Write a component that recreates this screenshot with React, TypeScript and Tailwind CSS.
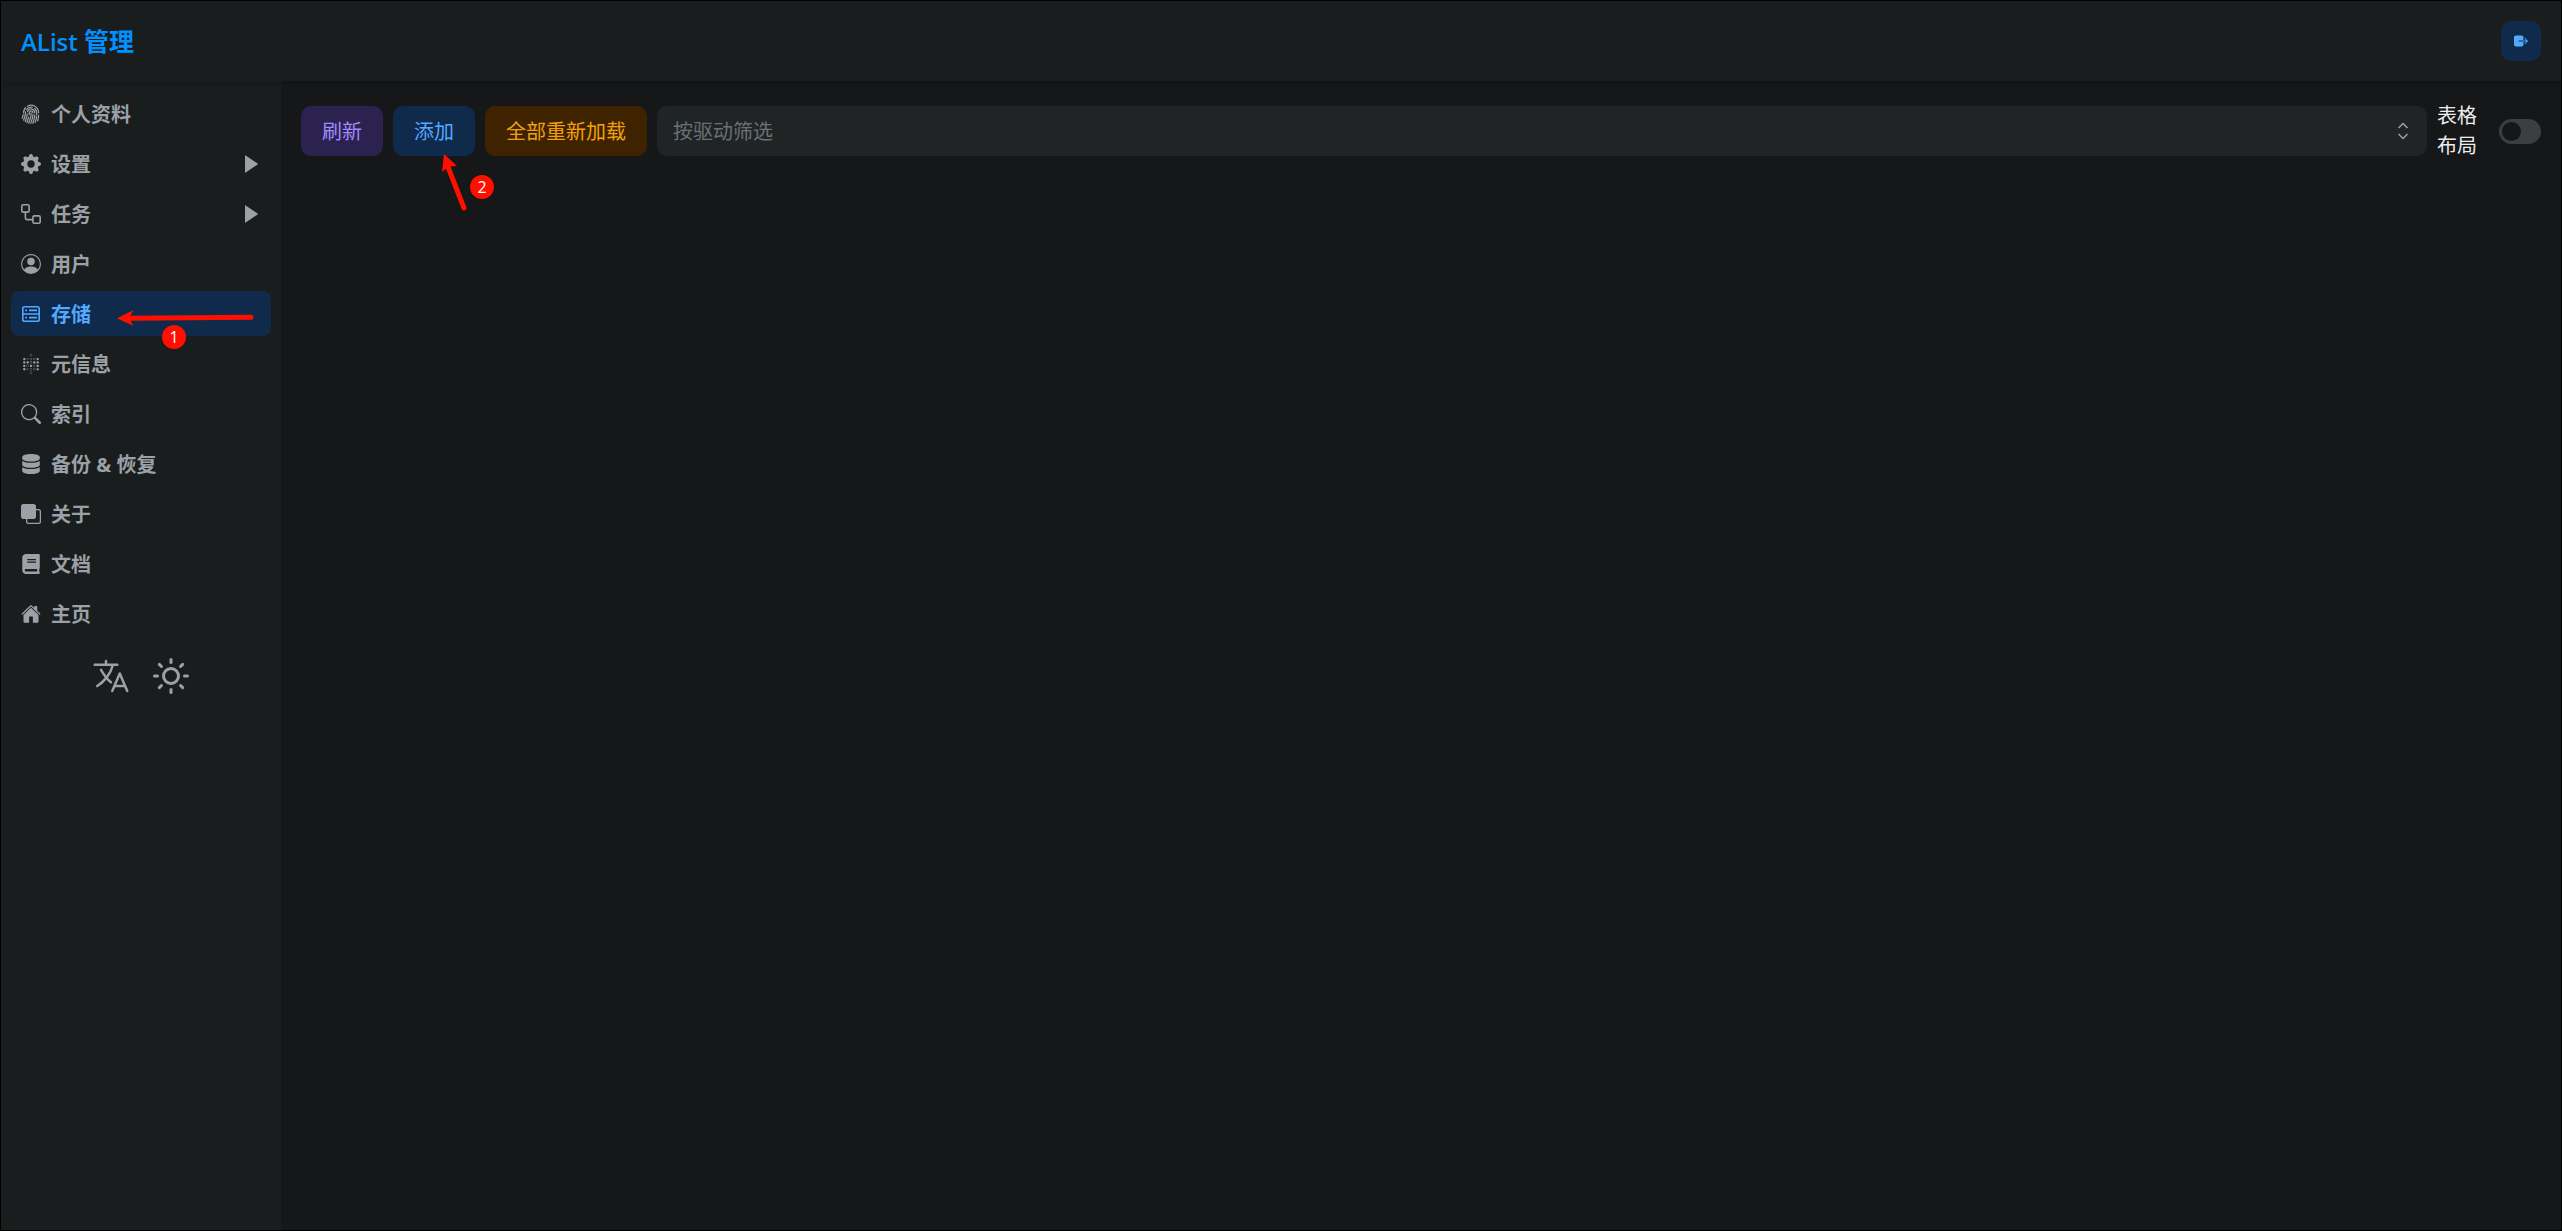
import type { IconType } from "react-icons";
import {
  BsFingerprint,
  BsFront,
  BsGearFill,
  BsPersonCircle,
  BsSearch,
} from "react-icons/bs";
import { FaBook, FaDatabase } from "react-icons/fa";
import { FiSun } from "react-icons/fi";
import { IoExit, IoHome, IoLanguageOutline } from "react-icons/io5";
import { SiMetabase } from "react-icons/si";
import { clsx } from "clsx";
import { useState } from "react";

interface IconProps {
  className?: string;
}

interface MenuItem {
  title: string;
  to: string;
  icon: IconType | ((props: IconProps) => React.ReactNode);
  children?: boolean;
}

function WorkflowIcon({ className }: IconProps) {
  return (
    <svg
      viewBox="0 0 20 20"
      className={className}
      fill="none"
      stroke="currentColor"
      strokeWidth="1.6"
    >
      <rect x=".8" y=".8" width="7.3" height="7.3" rx="1.4" />
      <rect x="11.9" y="11.9" width="7.3" height="7.3" rx="1.4" />
      <path d="M4.4 8v6.1q0 1.5 1.5 1.5H12" />
    </svg>
  );
}

function StorageIcon({ className }: IconProps) {
  return (
    <svg
      viewBox="0 0 20 20"
      className={className}
      fill="none"
      stroke="currentColor"
      strokeWidth="1.6"
    >
      <rect x="1.8" y="2.8" width="16.4" height="14.4" rx="1.8" />
      <path d="M1.8 10h16.4M4.2 6.4h1.8M8 6.400h8M4.2 13.600h1.8M8 13.600h8" />
    </svg>
  );
}

const menuItems: MenuItem[] = [
  { title: "个人资料", to: "#profile", icon: BsFingerprint },
  { title: "设置", to: "#settings", icon: BsGearFill, children: true },
  { title: "任务", to: "#tasks", icon: WorkflowIcon, children: true },
  { title: "用户", to: "#users", icon: BsPersonCircle },
  { title: "存储", to: "#storages", icon: StorageIcon },
  { title: "元信息", to: "#metas", icon: SiMetabase },
  { title: "索引", to: "#indexes", icon: BsSearch },
  { title: "备份 & 恢复", to: "#backup", icon: FaDatabase },
  { title: "关于", to: "#about", icon: BsFront },
  { title: "文档", to: "#docs", icon: FaBook },
  { title: "主页", to: "#home", icon: IoHome },
];

function StepBadge({ step, className }: { step: number; className: string }) {
  return (
    <span
      className={clsx(
        "absolute flex size-6 items-center justify-center rounded-full bg-[#ff0f00] text-base leading-none font-normal text-white",
        className,
      )}
    >
      {step}
    </span>
  );
}

function Header() {
  return (
    <header className="relative z-10 flex h-20 items-center justify-between bg-[#1a1d1e] px-5 shadow-md">
      <h1 className="text-[25px] leading-8 font-bold text-[#0091ff]">
        <span className="text-2xl font-semibold">AList </span>管理
      </h1>
      <button
        type="button"
        aria-label="登出"
        className="flex size-10 items-center justify-center rounded-[10px] bg-[#102a4c] text-[#52a9ff]"
      >
        <IoExit className="size-4" />
      </button>
    </header>
  );
}

function SideMenuItem({ item, active }: { item: MenuItem; active: boolean }) {
  const Icon = item.icon;
  return (
    <li className="relative">
      <a
        href={item.to}
        className={clsx(
          "flex h-[45px] items-center gap-2.5 rounded-lg px-2.5 text-xl font-bold",
          active ? "bg-[#102a4c] text-[#52a9ff]" : "text-[#9ba1a6]",
        )}
      >
        <Icon className="size-5 shrink-0" />
        <span className="grow pt-0.5">{item.title}</span>
        {item.children && (
          <svg viewBox="0 0 20 20" className="size-5" fill="currentColor">
            <path d="M4 1.8v16.4q0 .8.7.4l11.8-8.100q.6-.5 0-1L4.700 1.400Q4 1 4 1.800z" />
          </svg>
        )}
      </a>
      {active && (
        <>
          <svg
            viewBox="0 0 140 18"
            className="absolute top-[18px] left-[105px] h-[18px] w-[140px]"
          >
            <path
              d="M12 9.200 135 8.300"
              stroke="#ff0f00"
              strokeWidth="5"
              strokeLinecap="round"
            />
            <path d="M1 9.300 17.500 1 13 9.200 17.500 17z" fill="#ff0f00" />
          </svg>
          <StepBadge step={1} className="top-[34px] left-[151px]" />
        </>
      )}
    </li>
  );
}

function SideMenu() {
  return (
    <aside className="w-[280px] shrink-0 bg-[#1a1d1e] p-2.5">
      <nav>
        <ul className="flex flex-col gap-[5px]">
          {menuItems.map((item) => (
            <SideMenuItem
              key={item.to}
              item={item}
              active={item.to === "#storages"}
            />
          ))}
        </ul>
      </nav>
      <div className="mt-5 flex justify-center gap-5 text-[#9ba1a6]">
        <button
          type="button"
          aria-label="语言"
          className="flex size-10 items-center justify-center"
        >
          <IoLanguageOutline className="size-10" />
        </button>
        <button
          type="button"
          aria-label="切换主题"
          className="flex size-10 items-center justify-center"
        >
          <FiSun className="size-9" />
        </button>
      </div>
    </aside>
  );
}

function Storages() {
  const [tableLayout, setTableLayout] = useState(false);

  return (
    <main className="grow p-5">
      <div className="flex items-center gap-2.5 text-xl">
        <button
          type="button"
          className="h-[50px] shrink-0 rounded-[10px] bg-[#2c2250] px-[21px] pt-0.5 text-[#9e8cfc]"
        >
          刷新
        </button>
        <div className="relative shrink-0">
          <button
            type="button"
            className="h-[50px] rounded-[10px] bg-[#102a4c] px-[21px] pt-0.5 text-[#52a9ff]"
          >
            添加
          </button>
          <svg
            viewBox="0 0 30 60"
            className="absolute top-12 left-[45px] h-[60px] w-[30px]"
          >
            <path
              d="M10 13 26 54"
              stroke="#ff0f00"
              strokeWidth="5"
              strokeLinecap="round"
            />
            <path d="M6 0 19 12 10.500 12.500 4 18z" fill="#ff0f00" />
          </svg>
          <StepBadge step={2} className="top-[69px] left-[77px]" />
        </div>
        <button
          type="button"
          className="h-[50px] shrink-0 rounded-[10px] bg-[#3f2200] px-[21px] pt-0.5 text-[#f1a10d]"
        >
          全部重新加载
        </button>
        <div className="relative grow">
          <select
            aria-label="按驱动筛选"
            defaultValue=""
            className="block h-[50px] w-full appearance-none rounded-[10px] bg-[#202425] px-4 pt-0.5 text-[#697177]"
          >
            <option value="">按驱动筛选</option>
          </select>
          <svg
            viewBox="0 0 12 18"
            className="pointer-events-none absolute top-4 right-[18px] h-[18px] w-3"
            fill="none"
            stroke="#9ba1a6"
            strokeWidth="1.5"
          >
            <path d="M1.500 6 6 1.500 10.500 6M1.500 12 6 16.500 10.500 12" />
          </svg>
        </div>
        <label className="flex shrink-0 items-center gap-[22px] text-[#ecedee]">
          <span className="w-10 leading-[30px]">表格布局</span>
          <input
            type="checkbox"
            role="switch"
            checked={tableLayout}
            onChange={(e) => setTableLayout(e.target.checked)}
            className="h-[25px] w-[42px] appearance-none rounded-full bg-[#3a3f42] p-[3px] before:block before:size-[19px] before:rounded-full before:bg-[#151718] checked:bg-[#0091ff] checked:before:ml-auto"
          />
        </label>
      </div>
    </main>
  );
}

export default function App() {
  return (
    <div className="flex min-h-screen flex-col border border-black bg-[#151718] font-['Open_Sans','Noto_Sans_CJK_SC',sans-serif]">
      <Header />
      <div className="flex grow">
        <SideMenu />
        <Storages />
      </div>
    </div>
  );
}
